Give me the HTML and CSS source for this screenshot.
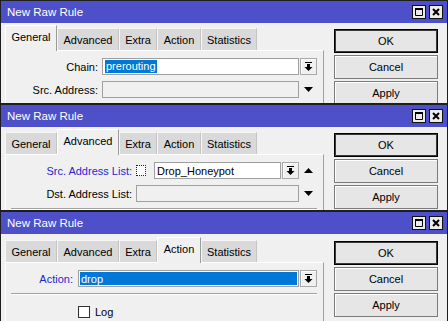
FILE: index.html
```html
<!DOCTYPE html>
<html>
<head>
<meta charset="utf-8">
<link rel="stylesheet" href="styles.css">
</head>
<body>
<div class="win w1">
  <div class="title"><span>New Raw Rule</span>
    <div class="tb">
      <span class="tbtn"><svg width="8" height="8" viewBox="0 0 8 8"><path d="M0.5 0.5h7v7h-7z" fill="none" stroke="#000"/><rect x="0" y="0" width="8" height="2"/></svg></span>
      <span class="tbtn"><svg width="8" height="8" viewBox="0 0 8 8"><path d="M1 1L7 7M7 1L1 7" stroke="#000" stroke-width="2"/></svg></span>
    </div>
  </div>
  <div class="body">
    <div class="main">
      <div class="tabs">
        <div class="tab on tg">General</div>
        <div class="tab ta">Advanced</div>
        <div class="tab te">Extra</div>
        <div class="tab tc">Action</div>
        <div class="tab ts">Statistics</div>
      </div>
      <div class="pane">
        <div class="row">
          <div class="lbl">Chain:</div>
          <div class="field"><span class="sel">prerouting</span></div>
          <div class="trail"><span class="dd"><svg width="9" height="10" viewBox="0 0 9 10"><rect x="1" y="0" width="7" height="1"/><rect x="3" y="2" width="3" height="3"/><path d="M0.5 5h8l-4 4z"/></svg></span></div>
        </div>
        <div class="row">
          <div class="lbl">Src. Address:</div>
          <div class="field dis"></div>
          <div class="trail"><svg width="9" height="5" viewBox="0 0 9 5"><path d="M0 0h9l-4.5 5z"/></svg></div>
        </div>
      </div>
    </div>
    <div class="btns">
      <div class="btn def">OK</div>
      <div class="btn">Cancel</div>
      <div class="btn">Apply</div>
    </div>
  </div>
</div>

<div class="win w2">
  <div class="title"><span>New Raw Rule</span>
    <div class="tb">
      <span class="tbtn"><svg width="8" height="8" viewBox="0 0 8 8"><path d="M0.5 0.5h7v7h-7z" fill="none" stroke="#000"/><rect x="0" y="0" width="8" height="2"/></svg></span>
      <span class="tbtn"><svg width="8" height="8" viewBox="0 0 8 8"><path d="M1 1L7 7M7 1L1 7" stroke="#000" stroke-width="2"/></svg></span>
    </div>
  </div>
  <div class="body">
    <div class="main">
      <div class="tabs">
        <div class="tab tg">General</div>
        <div class="tab on ta">Advanced</div>
        <div class="tab te">Extra</div>
        <div class="tab tc">Action</div>
        <div class="tab ts">Statistics</div>
      </div>
      <div class="pane">
        <div class="row">
          <div class="lbl blue">Src. Address List:</div>
          <span class="tog"></span>
          <div class="field">Drop_Honeypot</div>
          <span class="dd dd2"><svg width="9" height="10" viewBox="0 0 9 10"><rect x="1" y="0" width="7" height="1"/><rect x="3" y="2" width="3" height="3"/><path d="M0.5 5h8l-4 4z"/></svg></span>
          <div class="trail"><svg width="9" height="5" viewBox="0 0 9 5"><path d="M0 5h9l-4.5-5z"/></svg></div>
        </div>
        <div class="row">
          <div class="lbl">Dst. Address List:</div>
          <div class="field dis"></div>
          <div class="trail"><svg width="9" height="5" viewBox="0 0 9 5"><path d="M0 0h9l-4.5 5z"/></svg></div>
        </div>
        <div class="sep"></div>
      </div>
    </div>
    <div class="btns">
      <div class="btn def">OK</div>
      <div class="btn">Cancel</div>
      <div class="btn">Apply</div>
    </div>
  </div>
</div>

<div class="win w3">
  <div class="title"><span>New Raw Rule</span>
    <div class="tb">
      <span class="tbtn"><svg width="8" height="8" viewBox="0 0 8 8"><path d="M0.5 0.5h7v7h-7z" fill="none" stroke="#000"/><rect x="0" y="0" width="8" height="2"/></svg></span>
      <span class="tbtn"><svg width="8" height="8" viewBox="0 0 8 8"><path d="M1 1L7 7M7 1L1 7" stroke="#000" stroke-width="2"/></svg></span>
    </div>
  </div>
  <div class="body">
    <div class="main">
      <div class="tabs">
        <div class="tab tg">General</div>
        <div class="tab ta">Advanced</div>
        <div class="tab te">Extra</div>
        <div class="tab on tc">Action</div>
        <div class="tab ts">Statistics</div>
      </div>
      <div class="pane">
        <div class="row">
          <div class="lbl blue">Action:</div>
          <div class="field selfield">drop</div>
          <div class="trail"><span class="dd"><svg width="9" height="10" viewBox="0 0 9 10"><rect x="1" y="0" width="7" height="1"/><rect x="3" y="2" width="3" height="3"/><path d="M0.5 5h8l-4 4z"/></svg></span></div>
        </div>
        <div class="sep"></div>
        <div class="row chk">
          <div class="lbl"></div>
          <span class="cb"></span>
          <span class="cbl">Log</span>
        </div>
      </div>
    </div>
    <div class="btns">
      <div class="btn def">OK</div>
      <div class="btn">Cancel</div>
      <div class="btn">Apply</div>
    </div>
  </div>
</div>
</body>
</html>
```

FILE: styles.css
```css
* { box-sizing: border-box; margin: 0; padding: 0; }
html, body { width: 448px; height: 321px; overflow: hidden; background: #f0f0f0; }
body { font-family: "Liberation Sans", Arial, sans-serif; font-size: 11px; color: #000; }

.win { width: 448px; border: 1px solid #1e1e1e; border-bottom: none; background: #f0f0f0; overflow: hidden; display: flex; flex-direction: column; }
.w1 { height: 104px; border-bottom: 1px solid #1e1e1e; }
.w2 { height: 107px; border-bottom: 1px solid #1e1e1e; }
.w3 { height: 110px; }

.title { height: 22px; flex: none; background: #4e50c9; color: #fff; font-size: 11.5px; display: flex; align-items: center; justify-content: space-between; padding: 0 4px 0 6px; }
.tb { display: flex; gap: 3px; }
.tbtn { width: 14px; height: 14px; border: 1px solid #111; background: #ececec; display: flex; align-items: center; justify-content: center; }

.body { flex: 1; display: flex; padding: 0 9px 0 4px; min-height: 0; }
.main { width: 319px; display: flex; flex-direction: column; padding-top: 2px; }
.w3 .main { padding-top: 3px; }

.tabs { display: flex; align-items: flex-end; height: 25px; flex: none; }
.tab { height: 22px; background: #d9d9d9; border-top: 1px solid #f6f6f6; border-left: 1px solid #f6f6f6; border-right: 1px solid #c4c4c4; display: flex; align-items: center; justify-content: center; padding-top: 1px; }
.tab.on { height: 26px; margin-bottom: -1px; background: #f0f0f0; border-top: 1px solid #fff; border-left: 1px solid #fff; border-right: 1px solid #9a9a9a; position: relative; z-index: 1; padding-bottom: 4px; }
.tg { width: 52px; }
.ta { width: 62px; }
.te { width: 38px; }
.tc { width: 44px; }
.ts { width: 56px; }

.pane { flex: 1; border-top: 1px solid #fff; border-left: 1px solid #fff; border-right: 1px solid #a0a0a0; padding: 7px 6px 0 0; }
.row { display: flex; align-items: center; height: 17px; margin-bottom: 6px; }
.lbl { flex: none; text-align: right; padding-right: 4px; white-space: nowrap; }
.w1 .lbl { width: 96px; }
.w2 .lbl { width: 130px; }
.w3 .lbl { width: 72px; padding-right: 5px; }
.blue { color: #2626d4; }

.field { flex: 1; height: 17px; border: 1px solid #a0a0a0; background: #fff; display: flex; align-items: center; padding-left: 2px; white-space: nowrap; overflow: hidden; }
.field.dis { background: #f0f0f0; }
.sel { background: #0078d7; color: #fff; padding: 0 1px; line-height: 13px; }
.selfield { background: #0078d7; color: #fff; box-shadow: inset 0 0 0 1px #fff; }
.trail { width: 17px; margin-left: 1px; flex: none; display: flex; align-items: center; justify-content: center; height: 17px; }
.dd { width: 17px; height: 17px; border: 1px solid #a8a8a8; background: #f0f0f0; box-shadow: inset 1px 1px 0 #fff; display: flex; align-items: center; justify-content: center; flex: none; }
.dd2 { margin-left: 1px; }
.tog { width: 10px; height: 11px; margin-right: 8px; flex: none; border: 1px dotted #222; background: #fafafa; box-shadow: inset 0 0 0 1px #fff; }

.sep { height: 2px; border-top: 1px solid #a0a0a0; border-bottom: 1px solid #fff; margin: 0 0 8px 5px; }
.cb { width: 12px; height: 12px; border: 1px solid #333; background: #fff; flex: none; }
.cbl { margin-left: 5px; }

.btns { width: 104px; margin-left: 10px; padding-top: 6px; display: flex; flex-direction: column; gap: 2px; }
.w3 .btns { padding-top: 7px; }
.btn { height: 24px; flex: none; border: 1px solid #7a7a7a; background: #e6e6e6; box-shadow: inset 1px 1px 0 #fff; display: flex; align-items: center; justify-content: center; }
.btn.def { border: 1px solid #000; box-shadow: inset 0 0 0 1px #3a3a3a; }
```
